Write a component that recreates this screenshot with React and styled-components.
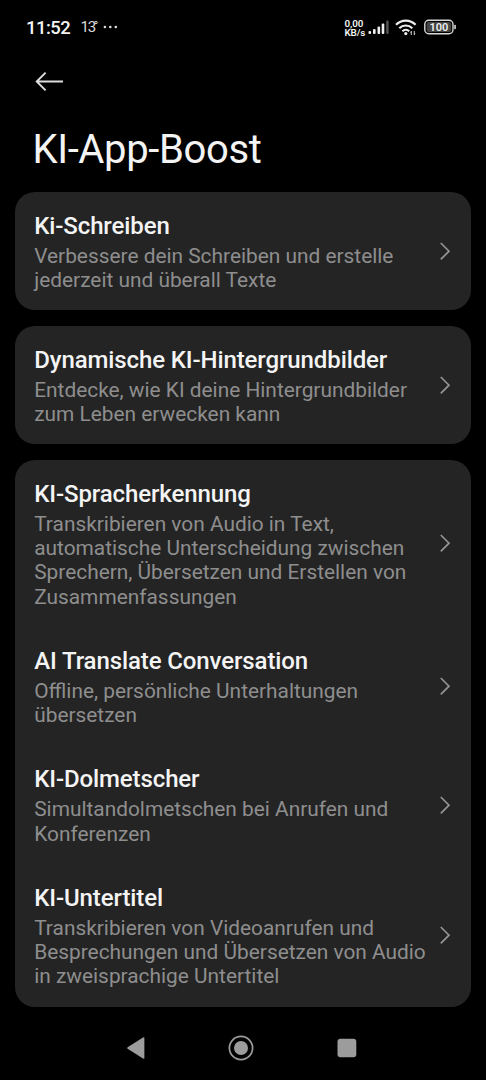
import React from 'react'
import styled, { createGlobalStyle } from 'styled-components';

const GlobalStyle = createGlobalStyle`
  * {
    box-sizing: border-box;
  }
  body {
    margin: 0;
    background: #000;
    font-family: Roboto, "Liberation Sans", sans-serif;
  }
`;

const Screen = styled.div`
  display: flex;
  flex-direction: column;
  width: 486px;
  height: 1080px;
  overflow: hidden;
  background: #000;
  color: #f4f4f4;
`;

const StatusBar = styled.header`
  display: flex;
  align-items: center;
  height: 54px;
  padding: 0 29px 0 26px;
`;

const Clock = styled.span`
  font-size: 18.4px;
  font-weight: 500;
  line-height: 22px;
  letter-spacing: -0.5px;
  width: 54.5px;
  padding-top: 1px;
  white-space: nowrap;
`;

const Temperature = styled.span`
  display: flex;
  width: 22px;
  font-size: 15px;
  line-height: 18px;
  letter-spacing: -1.2px;
  color: #dcdcdc;
  white-space: nowrap;
`;

const Degree = styled.span`
  margin-left: -1.5px;
  font-size: 13px;
  line-height: 15px;
`;

const StatusIcons = styled.div`
  display: flex;
  align-items: center;
  margin-left: auto;
`;

const NetSpeed = styled.div`
  width: 23.5px;
  padding-top: 1px;
  font-size: 9.8px;
  font-weight: 600;
  line-height: 9px;
  letter-spacing: -0.1px;
  white-space: nowrap;
`;

const Icon = styled.svg`
  display: block;
  flex: none;
`;

const BackButton = styled.button`
  display: block;
  width: 30px;
  height: 22px;
  margin: 17px 0 0 35px;
  padding: 0;
  border: 0;
  background: none;
`;

const PageTitle = styled.h1`
  margin: 33px 0 0 32.4px;
  height: 66px;
  font-size: 40px;
  font-weight: 400;
  line-height: 48px;
  letter-spacing: -0.35px;
  white-space: nowrap;
`;

const CardList = styled.main`
  display: flex;
  flex-direction: column;
  gap: 15.4px;
  padding: 0 15px;
`;

const Card = styled.section`
  border-radius: 20px;
  background: #242424;
`;

const Row = styled.div`
  display: flex;
  align-items: center;
  justify-content: space-between;
  padding: 20px 19.8px 17.9px 19.2px;
`;

const RowTitle = styled.h2`
  margin: 0;
  font-size: 24px;
  font-weight: 500;
  line-height: 28px;
  letter-spacing: -0.11px;
  padding-bottom: 4px;
  white-space: nowrap;
`;

const Description = styled.p`
  margin: 0;
  font-size: 20.86px;
  line-height: 24.3px;
  color: #8e8e8e;
  white-space: pre;
`;

const NavBar = styled.nav`
  display: flex;
  align-items: center;
  justify-content: space-between;
  margin-top: auto;
  height: 64px;
  padding: 0 129px 0 126px;
`;

const cards = [
  [
    {
      title: 'Ki-Schreiben',
      lines: ['Verbessere dein Schreiben und erstelle', 'jederzeit und überall Texte'],
    },
  ],
  [
    {
      title: 'Dynamische KI-Hintergrundbilder',
      lines: ['Entdecke, wie KI deine Hintergrundbilder', 'zum Leben erwecken kann'],
    },
  ],
  [
    {
      title: 'KI-Spracherkennung',
      lines: [
        'Transkribieren von Audio in Text,',
        'automatische Unterscheidung zwischen',
        'Sprechern, Übersetzen und Erstellen von',
        'Zusammenfassungen',
      ],
    },
    {
      title: 'AI Translate Conversation',
      lines: ['Offline, persönliche Unterhaltungen', 'übersetzen'],
    },
    {
      title: 'KI-Dolmetscher',
      lines: ['Simultandolmetschen bei Anrufen und', 'Konferenzen'],
    },
    {
      title: 'KI-Untertitel',
      lines: [
        'Transkribieren von Videoanrufen und',
        'Besprechungen und Übersetzen von Audio',
        'in zweisprachige Untertitel',
      ],
    },
  ],
];

function Chevron() {
  return (
    <Icon width="12" height="22" viewBox="0 0 12 22" fill="none" stroke="#949494" strokeWidth="1.7">
      <path d="M1.8 2L10 10.200l-8.200 8.200" />
    </Icon>
  )
}

function Signal() {
  return (
    <Icon width="22" height="14" viewBox="0 0 22 14" fill="#eee">
      <rect x="0.5" y="11" width="2.6" height="3" rx="1" />
      <rect x="5" y="9" width="2.6" height="5" rx="1" />
      <rect x="9.5" y="6.5" width="2.6" height="7.5" rx="1" />
      <rect x="13.7" y="3.5" width="2.6" height="10.5" rx="1" />
      <rect x="18.2" y="0.5" width="2.4" height="13.5" rx="1" fill="#555" />
    </Icon>
  )
}

const WifiIcon = styled(Icon)`
  margin-left: 5px;
`;

function Wifi() {
  return (
    <WifiIcon width="22" height="17" viewBox="0 0 22 17" fill="none" stroke="#eee" strokeWidth="2.2">
      <path d="M1 5.8a13.6 13.6 0 0 1 19.6 0" />
      <path d="M4.3 9.2a9.2 9.2 0 0 1 13 0" />
      <path d="M7.4 12.3a4.9 4.9 0 0 1 6.8 0" />
      <circle cx="10.8" cy="14.6" r="1.6" fill="#eee" stroke="none" />
      <path d="M16.3 12v4M19.3 12v4" stroke="#bbb" strokeWidth="1.1" />
      <path d="M15 13.8l1.6-2v2zM20.6 14.2l-1.6 2v-2z" fill="#bbb" stroke="none" />
    </WifiIcon>
  )
}

const BatteryIcon = styled(Icon)`
  margin-left: 7px;
`;

function Battery() {
  return (
    <BatteryIcon width="33" height="16" viewBox="0 0 33 16">
      <rect x="0.8" y="1.3" width="28.2" height="13.4" rx="4" fill="#000" stroke="#d8d8d8" strokeWidth="1.4" />
      <rect x="2.6" y="3.1" width="24.6" height="9.8" rx="2.2" fill="#444" />
      <rect x="30.2" y="5.8" width="1.7" height="4.4" rx="0.8" fill="#ccc" />
      <text x="14.9" y="12" textAnchor="middle" fontSize="11" fontWeight="600" fill="#eee">100</text>
    </BatteryIcon>
  )
}

export default function App() {
  return (
    <Screen>
      <GlobalStyle />
      <StatusBar>
        <Clock>11:52</Clock>
        <Temperature>13<Degree>°</Degree></Temperature>
        <Icon width="15" height="4" viewBox="0 0 15 4" fill="#ddd">
          <circle cx="1.9" cy="2" r="1.3" />
          <circle cx="7.3" cy="2" r="1.3" />
          <circle cx="12.8" cy="2" r="1.3" />
        </Icon>
        <StatusIcons>
          <NetSpeed>
            <div>0,00</div>
            <div>KB/s</div>
          </NetSpeed>
          <Signal />
          <Wifi />
          <Battery />
        </StatusIcons>
      </StatusBar>

      <BackButton aria-label="Zurück">
        <Icon width="30" height="22" viewBox="0 0 30 22" fill="none" stroke="#dedede" strokeWidth="1.9">
          <path d="M1.5 10.5H28M10.6 1.6l-8.900 8.900 8.900 8.900" />
        </Icon>
      </BackButton>
      <PageTitle>KI-App-Boost</PageTitle>

      <CardList>
        {cards.map((rows, index) => (
          <Card key={index}>
            {rows.map(({ title, lines }) => (
              <Row key={title}>
                <div>
                  <RowTitle>{title}</RowTitle>
                  <Description>{lines.join('\n')}</Description>
                </div>
                <Chevron />
              </Row>
            ))}
          </Card>
        ))}
      </CardList>

      <NavBar>
        <Icon width="19" height="24" viewBox="0 0 19 24" fill="#9c9c9c">
          <path d="M1.6 11.2L17.4 1.3q1-.5 1 .7v20q0 1.2-1 .7L1.6 12.8q-1-.8 0-1.6z" />
        </Icon>
        <Icon width="26" height="26" viewBox="0 0 26 26">
          <circle cx="13" cy="13" r="11.6" fill="none" stroke="#9c9c9c" strokeWidth="1.7" />
          <circle cx="13" cy="13" r="7" fill="#9c9c9c" />
        </Icon>
        <Icon width="20" height="20" viewBox="0 0 20 20">
          <rect x="0.5" y="0.8" width="18.8" height="18.4" rx="3" fill="#9c9c9c" />
        </Icon>
      </NavBar>
    </Screen>
  )
}
